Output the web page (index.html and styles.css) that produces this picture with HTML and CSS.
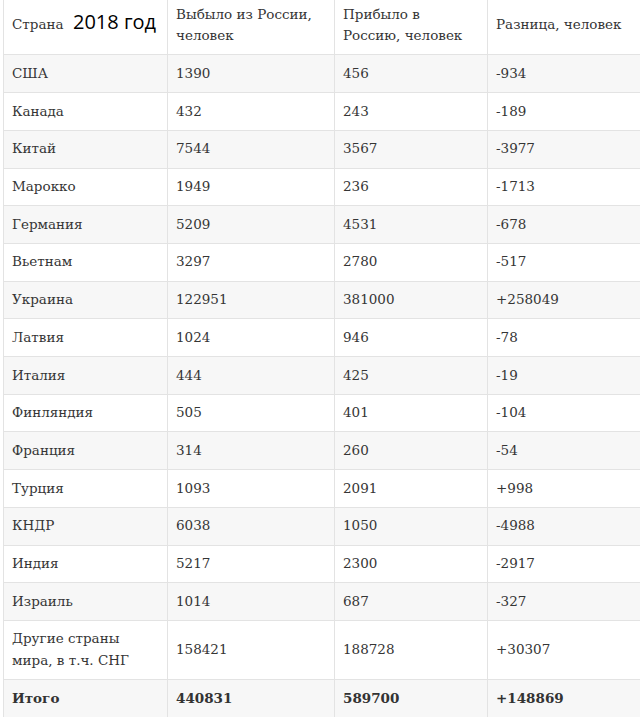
FILE: index.html
```html
<!DOCTYPE html>
<html lang="ru">
<head>
<meta charset="utf-8">
<link rel="stylesheet" href="styles.css">
</head>
<body>
<table class="tbl">
  <colgroup>
    <col class="c1"><col class="c2"><col class="c3"><col class="c4">
  </colgroup>
  <thead>
    <tr>
      <th class="first">Страна<span class="year">2018 год</span></th>
      <th>Выбыло из России,<br>человек</th>
      <th>Прибыло в<br>Россию, человек</th>
      <th>Разница, человек</th>
    </tr>
  </thead>
  <tbody>
    <tr><td>США</td><td>1390</td><td>456</td><td>-934</td></tr>
    <tr><td>Канада</td><td>432</td><td>243</td><td>-189</td></tr>
    <tr><td>Китай</td><td>7544</td><td>3567</td><td>-3977</td></tr>
    <tr><td>Марокко</td><td>1949</td><td>236</td><td>-1713</td></tr>
    <tr><td>Германия</td><td>5209</td><td>4531</td><td>-678</td></tr>
    <tr><td>Вьетнам</td><td>3297</td><td>2780</td><td>-517</td></tr>
    <tr><td>Украина</td><td>122951</td><td>381000</td><td>+258049</td></tr>
    <tr><td>Латвия</td><td>1024</td><td>946</td><td>-78</td></tr>
    <tr><td>Италия</td><td>444</td><td>425</td><td>-19</td></tr>
    <tr><td>Финляндия</td><td>505</td><td>401</td><td>-104</td></tr>
    <tr><td>Франция</td><td>314</td><td>260</td><td>-54</td></tr>
    <tr><td>Турция</td><td>1093</td><td>2091</td><td>+998</td></tr>
    <tr><td>КНДР</td><td>6038</td><td>1050</td><td>-4988</td></tr>
    <tr><td>Индия</td><td>5217</td><td>2300</td><td>-2917</td></tr>
    <tr><td>Израиль</td><td>1014</td><td>687</td><td>-327</td></tr>
    <tr><td>Другие страны<br>мира, в т.ч. СНГ</td><td>158421</td><td>188728</td><td>+30307</td></tr>
    <tr class="total"><td>Итого</td><td>440831</td><td>589700</td><td>+148869</td></tr>
  </tbody>
</table>
</body>
</html>
```
FILE: styles.css
```css
html, body {
  margin: 0;
  padding: 0;
  background: #ffffff;
  overflow: hidden;
}
body {
  width: 640px;
  height: 717px;
}
.tbl {
  border-collapse: collapse;
  table-layout: fixed;
  width: 637px;
  margin: -5px 0 0 3px;
  font-family: "DejaVu Serif", Georgia, serif;
  font-size: 13.5px;
  color: #353535;
}
.c1 { width: 164px; }
.c2 { width: 167px; }
.c3 { width: 153px; }
.c4 { width: 153px; }
.tbl th, .tbl td {
  border: 1px solid #e3e3e3;
  padding: 7.5px 8px;
  line-height: 21.7px;
  text-align: left;
  vertical-align: middle;
  font-weight: normal;
  white-space: nowrap;
}
.tbl th:last-child, .tbl td:last-child {
  border-right: none;
}
.tbl th.first {
  position: relative;
}
.year {
  position: absolute;
  left: 69px;
  top: 14px;
  font-family: "Open Sans", "Liberation Sans", sans-serif;
  font-size: 20px;
  line-height: 24px;
  color: #000;
}
.tbl tbody tr:nth-child(odd) td {
  background: #f7f7f7;
}
.tbl tr.total td {
  font-weight: bold;
  color: #333;
}
```
